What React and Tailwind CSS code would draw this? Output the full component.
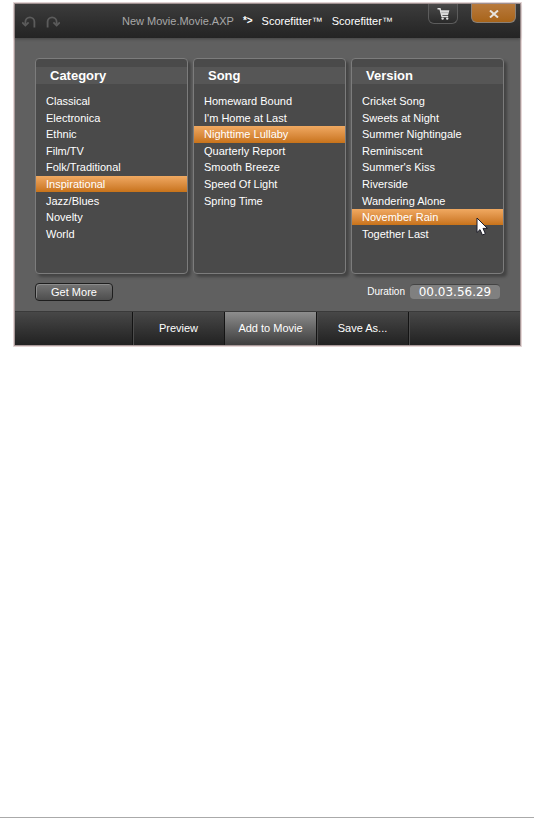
import React, { useState } from 'react';

const columns = [
  {
    title: 'Category',
    selected: 'Inspirational',
    items: [
      'Classical',
      'Electronica',
      'Ethnic',
      'Film/TV',
      'Folk/Traditional',
      'Inspirational',
      'Jazz/Blues',
      'Novelty',
      'World'
    ]
  },
  {
    title: 'Song',
    selected: 'Nighttime Lullaby',
    items: [
      'Homeward Bound',
      "I'm Home at Last",
      'Nighttime Lullaby',
      'Quarterly Report',
      'Smooth Breeze',
      'Speed Of Light',
      'Spring Time'
    ]
  },
  {
    title: 'Version',
    selected: 'November Rain',
    items: [
      'Cricket Song',
      'Sweets at Night',
      'Summer Nightingale',
      'Reminiscent',
      "Summer's Kiss",
      'Riverside',
      'Wandering Alone',
      'November Rain',
      'Together Last'
    ],
    showPointer: true
  }
];

const actions = ['Preview', 'Add to Movie', 'Save As...'];

function UndoIcon({ className }) {
  return (
    <svg viewBox="0 0 14 13" className={className} fill="none" stroke="currentColor" strokeWidth="1.8">
      <path d="M3.4 8V5.8A4.4 4.4 0 0 1 12.4 5.8V11.5" />
      <path d="M0.2 6.4L3.4 9.6L6.6 6.4" />
    </svg>
  );
}

function CartIcon() {
  return (
    <svg viewBox="0 0 13 12" className="h-3 w-[13px]" fill="none">
      <path d="M0.5 0.8H3L5 8.6H11.2" stroke="#e4e4e4" strokeWidth="1.4" />
      <path d="M3.4 2.2H12.4L11 7.2H4.8Z" fill="#dcdcdc" />
      <path d="M4.4 4.6H11.6" stroke="#8c8c8c" strokeWidth="0.5" />
      <circle cx="5.6" cy="10.6" r="1.2" fill="#e4e4e4" />
      <circle cx="10.2" cy="10.6" r="1.2" fill="#e4e4e4" />
    </svg>
  );
}

function CloseIcon() {
  return (
    <svg viewBox="0 0 10 8" className="h-2 w-2.5" stroke="#e8e4de" strokeWidth="2">
      <path d="M1 0.5L9 7.5M9 0.5L1 7.5" />
    </svg>
  );
}

function Pointer() {
  return (
    <svg viewBox="0 0 12 19" className="pointer-events-none absolute top-2 right-[15px] z-10 h-[19px] w-3">
      <path
        d="M1 1V15.5L4 12.6L6.4 18L9.4 16.7L7 11.4H11.4Z"
        fill="#ffffff"
        stroke="#1c1c28"
        strokeWidth="1"
      />
    </svg>
  );
}

function ListPanel({ title, items, selected: initial, showPointer }) {
  const [selected, setSelected] = useState(initial);

  return (
    <section className="flex h-[216px] flex-col rounded border border-[#7c7c7c] bg-[#4a4a4a] pt-2 shadow-[3px_3px_3px_rgba(0,0,0,0.3)]">
      <h2 className="h-[17px] bg-[#565656] pl-[14px] text-[13px] leading-[17px] font-bold">{title}</h2>
      <ul className="mt-[9px] grid h-[149px] grid-rows-9">
        {items.map((item) => (
          <li key={item} className="relative flex">
            <button
              type="button"
              onClick={() => setSelected(item)}
              className={
                item === selected
                  ? 'flex w-full items-center bg-linear-to-b from-[#f0a961] to-[#c87318] pl-[10px] text-left leading-4'
                  : 'flex w-full items-center pl-[10px] text-left leading-4'
              }
            >
              {item}
            </button>
            {showPointer && item === initial && <Pointer />}
          </li>
        ))}
      </ul>
    </section>
  );
}

export default function App() {
  const [duration, setDuration] = useState('00.03.56.29');

  return (
    <div className="flex min-h-screen flex-col border-b border-[#aaaaaa] bg-white pt-0.5 pr-3 pl-[13px] font-['Liberation_Sans',Arial,sans-serif] text-[11px] text-white">
      <div className="border border-[#e4d6d6]">
        <div className="border border-[#a89898] bg-[#606060]">
          {/* Title bar */}
          <header className="flex h-[34px] items-start bg-linear-to-b from-[#3c3c3c] to-[#242424] pr-1 pl-[7px] shadow-[0_1px_3px_rgba(0,0,0,0.3)]">
            <div className="flex gap-[10px] pt-3 text-[#5c5c5c]">
              <button type="button" aria-label="Undo">
                <UndoIcon className="h-[13px] w-[14px]" />
              </button>
              <button type="button" aria-label="Redo">
                <UndoIcon className="h-[13px] w-[14px] -scale-x-100" />
              </button>
            </div>
            <div className="ml-[62px] flex flex-1 items-center pt-[9px] leading-4 whitespace-nowrap">
              <span className="text-[#a8a8a8]">New Movie.Movie.AXP</span>
              <span className="ml-[9px] text-[10px] font-bold">*&gt;</span>
              <span className="ml-[9px]">Scorefitter™</span>
              <span className="ml-[9px]">Scorefitter™</span>
            </div>
            <button
              type="button"
              aria-label="Store"
              className="flex h-5 w-[30px] items-center justify-center rounded-b-md border border-t-0 border-[#5c5c5c] bg-linear-to-b from-[#4a4a4a] to-[#2a2a2a]"
            >
              <CartIcon />
            </button>
            <button
              type="button"
              aria-label="Close"
              className="ml-[13px] flex h-[19px] w-[45px] items-center justify-center rounded-b-md border border-t-0 border-[#8a8076] bg-linear-to-b from-[#b87a3c] to-[#a86418] pt-0.5"
            >
              <CloseIcon />
            </button>
          </header>

          <main className="pt-5 pr-4 pb-[10px] pl-5">
            <div className="grid grid-cols-3 gap-[5px]">
              {columns.map((column) => (
                <ListPanel key={column.title} {...column} />
              ))}
            </div>

            <div className="mt-2 flex h-[19px] items-center justify-between pr-1">
              <button
                type="button"
                className="h-[18px] w-[78px] rounded border border-[#1e1e1e] bg-linear-to-b from-[#747474] to-[#4e4e4e] leading-4 shadow-[inset_1px_1px_0_#8c8c8c]"
              >
                Get More
              </button>
              <div className="flex items-center gap-[5px]">
                <label htmlFor="duration" className="text-[10px]">Duration</label>
                <input
                  id="duration"
                  value={duration}
                  onChange={(e) => setDuration(e.target.value)}
                  className="h-[15px] w-[90px] rounded-sm border-t border-[#444444] bg-[#808080] text-center font-['DejaVu_Sans',sans-serif] text-[12px] leading-[14px] outline-none"
                />
              </div>
            </div>
          </main>

          {/* Action bar */}
          <footer className="grid h-[34px] grid-cols-[118px_92px_92px_92px_1fr] border-t border-[#3a3a3a] bg-linear-to-b from-[#484848] to-[#222222]">
            <div className="border-r border-[#141414]" />
            {actions.map((action) => (
              <button
                key={action}
                type="button"
                className={
                  action === 'Add to Movie'
                    ? 'border-r border-[#141414] bg-linear-to-b from-[#8e8e8e] to-[#3e3e3e]'
                    : 'border-r border-[#141414] shadow-[inset_1px_0_0_#4c4c4c]'
                }
              >
                {action}
              </button>
            ))}
            <div className="shadow-[inset_1px_0_0_#4c4c4c]" />
          </footer>
        </div>
      </div>
    </div>
  );
}
